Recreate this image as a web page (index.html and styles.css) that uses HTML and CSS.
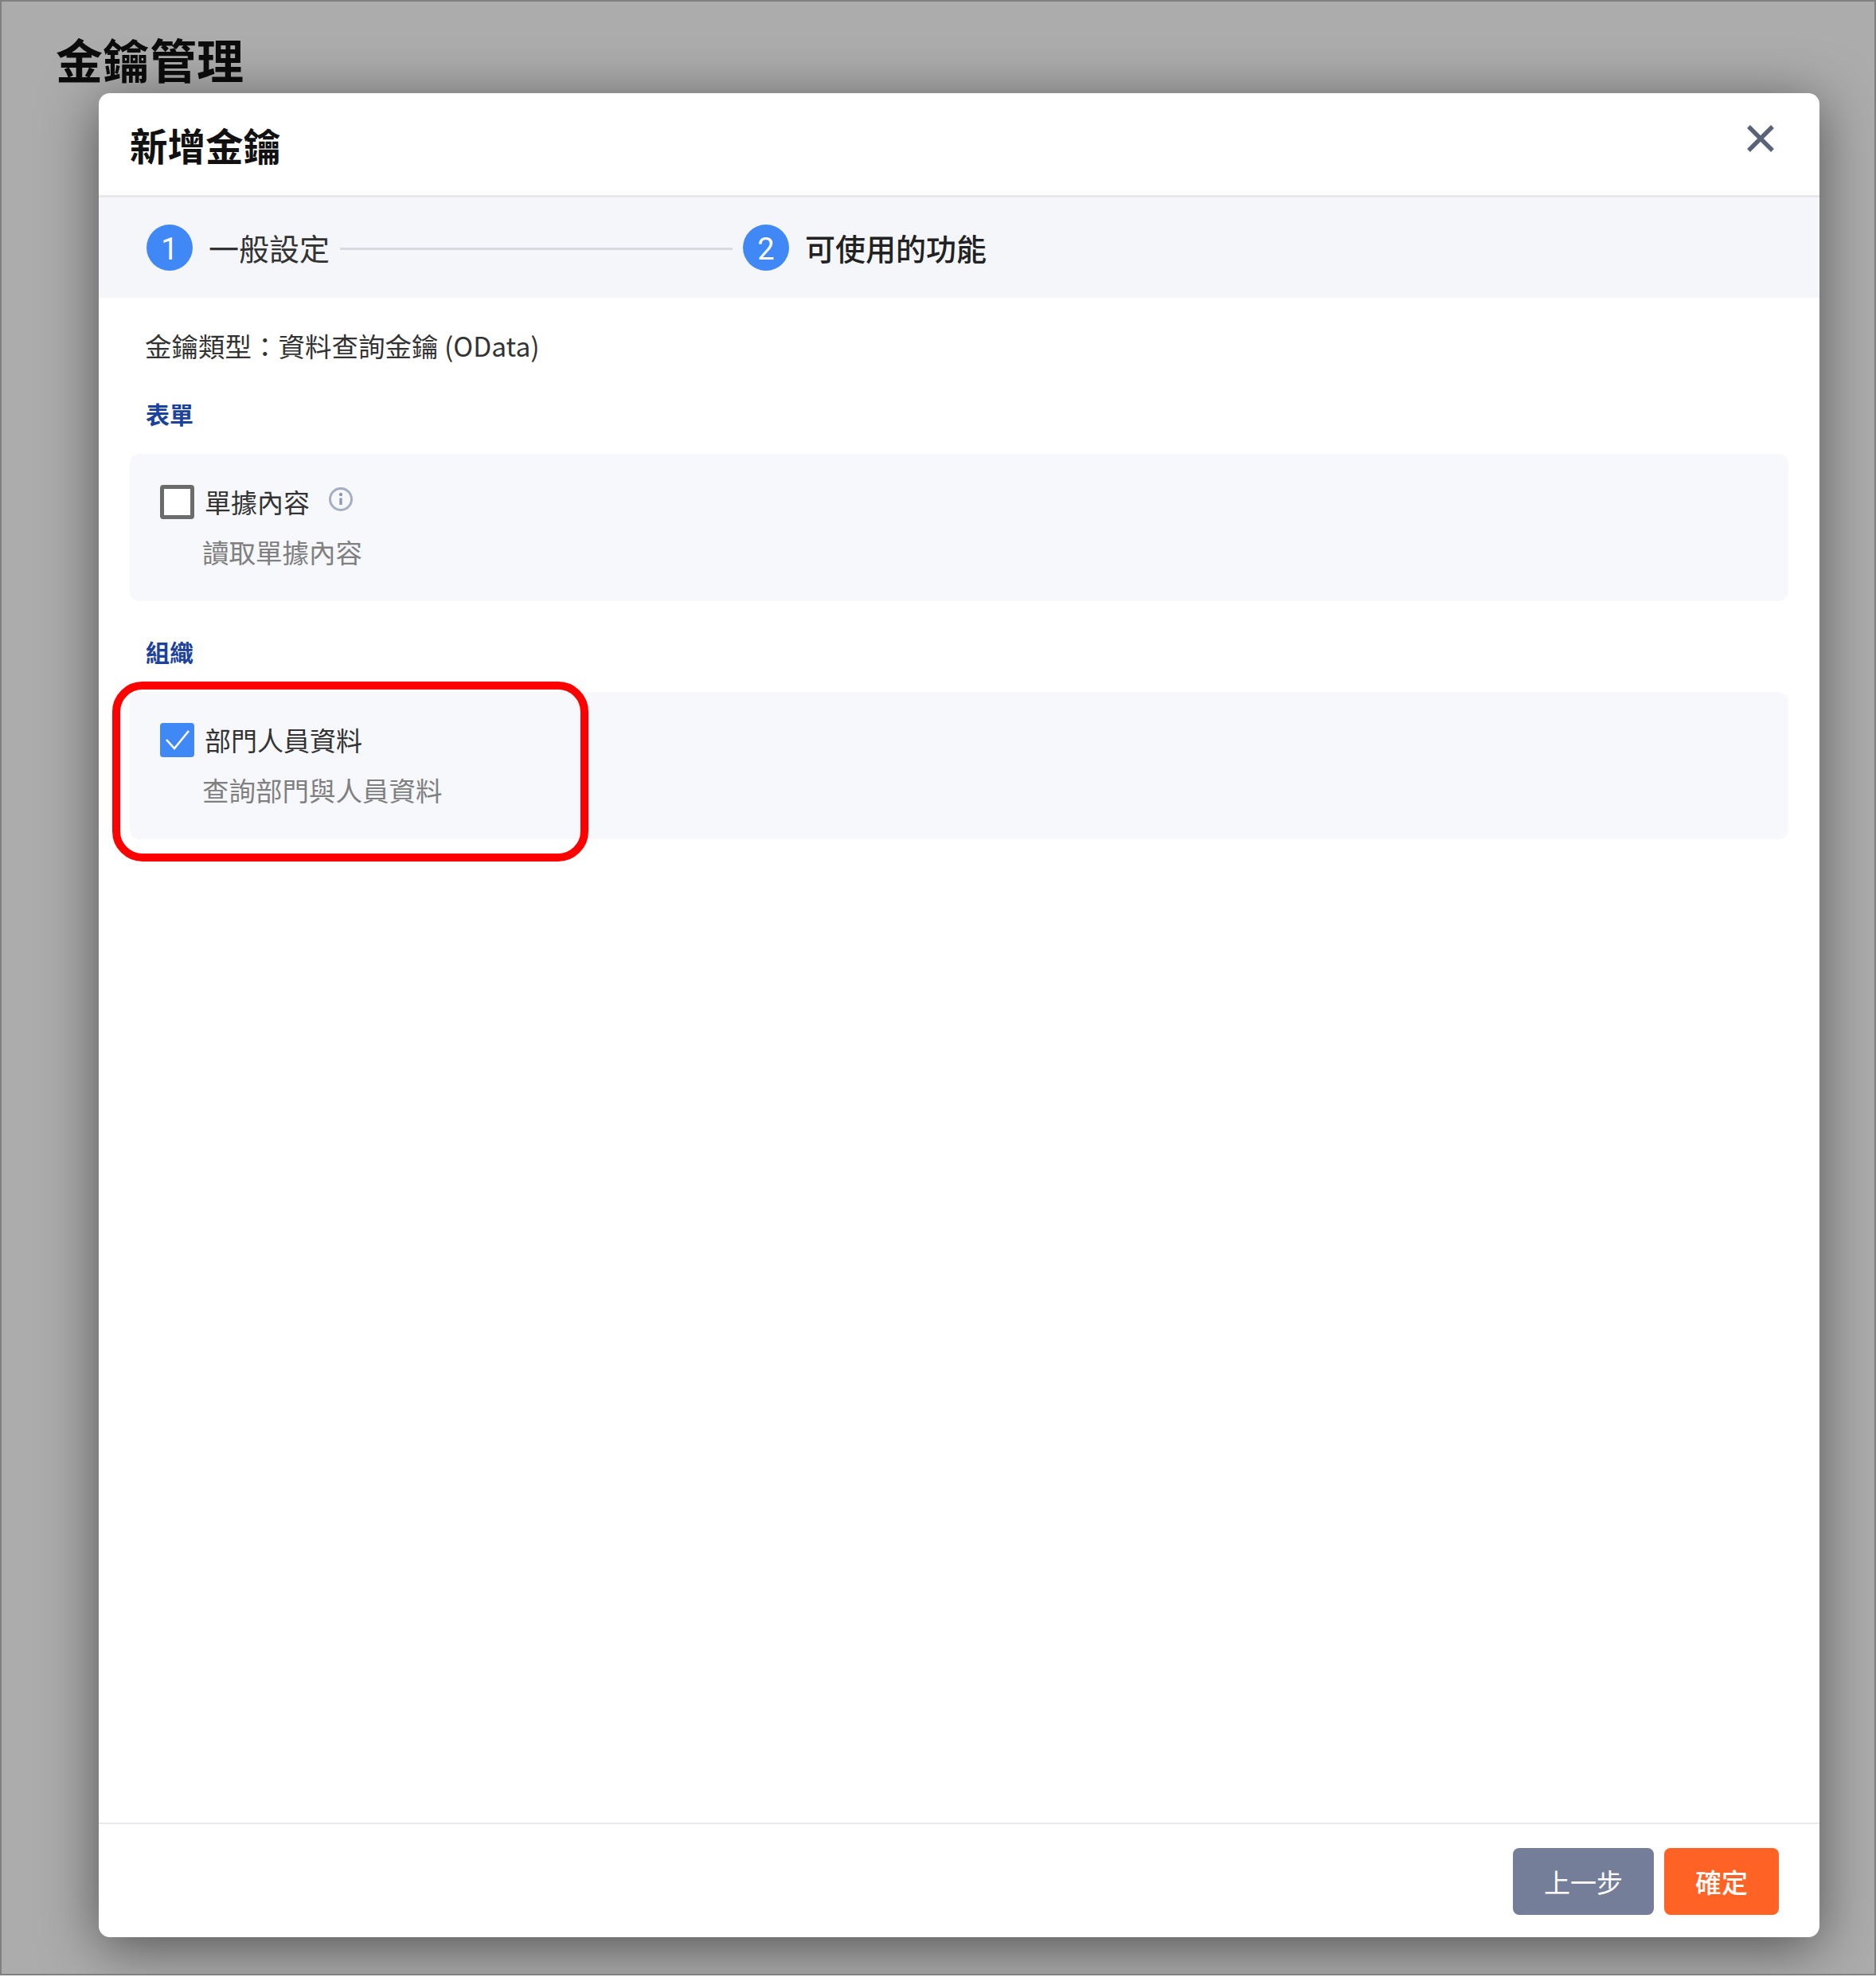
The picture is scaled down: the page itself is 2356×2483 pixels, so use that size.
FILE: index.html
```html
<!DOCTYPE html>
<html lang="zh-Hant">
<head>
<meta charset="utf-8">
<title>金鑰管理</title>
<link rel="stylesheet" href="styles.css">
</head>
<body>
<div class="screen">
  <h1 class="page-title">金鑰管理</h1>
  <section class="modal">
    <header class="modal-head">
      <h2 class="modal-title">新增金鑰</h2>
      <button class="close" aria-label="關閉">
        <svg viewBox="0 0 36 36" width="36" height="36"><path d="M3 3L33 33M33 3L3 33" fill="none" stroke="#5a6478" stroke-width="5.4"/></svg>
      </button>
    </header>
    <div class="steps">
      <span class="step-num">1</span>
      <span class="step-label">一般設定</span>
      <span class="step-line"></span>
      <span class="step-num">2</span>
      <span class="step-label step-current">可使用的功能</span>
    </div>
    <div class="modal-body">
      <p class="key-type">金鑰類型：資料查詢金鑰 (OData)</p>
      <h3 class="group-title">表單</h3>
      <div class="card">
        <div class="row">
          <span class="check"></span>
          <span class="label">單據內容</span>
          <svg class="info" viewBox="0 0 32 32" width="32" height="32"><circle cx="16" cy="16" r="13.5" fill="none" stroke="#a3aec4" stroke-width="3"/><circle cx="16" cy="10" r="2.2" fill="#8e9ab4"/><path d="M16 14.5V23" stroke="#8e9ab4" stroke-width="3.4"/></svg>
        </div>
        <p class="desc">讀取單據內容</p>
      </div>
      <h3 class="group-title group-second">組織</h3>
      <div class="card card-second">
        <div class="row">
          <span class="check checked">
            <svg viewBox="0 0 42 42" width="42" height="42"><path d="M7 21L17 32L35 10" fill="none" stroke="#fff" stroke-width="2.6"/></svg>
          </span>
          <span class="label">部門人員資料</span>
        </div>
        <p class="desc">查詢部門與人員資料</p>
      </div>
    </div>
    <footer class="modal-foot">
      <button class="btn btn-back">上一步</button>
      <button class="btn btn-ok">確定</button>
    </footer>
  </section>
  <div class="highlight"></div>
</div>
</body>
</html>
```
FILE: styles.css
```css
* { box-sizing: border-box; }
html, body { margin: 0; padding: 0; background: #fff; }
body { font-family: "Noto Sans CJK TC", "Noto Sans", sans-serif; }
.screen {
  position: relative;
  width: 2356px;
  height: 2481px;
  overflow: hidden;
  background: #acacac;
  border: 2px solid #808080;
  padding: 30px 0 0 68px;
}
.page-title {
  margin: 0;
  font-size: 59px;
  line-height: 84px;
  font-weight: 700;
  color: #0c0c0c;
}
.modal {
  position: absolute;
  left: 122px;
  top: 115px;
  width: 2161px;
  height: 2316px;
  display: flex;
  flex-direction: column;
  background: #fff;
  border-radius: 14px;
  box-shadow: 0 12px 70px rgba(0, 0, 0, 0.52);
}
.modal-head {
  flex: none;
  height: 131px;
  display: flex;
  align-items: center;
  justify-content: space-between;
  padding: 0 56px 0 39px;
  border-bottom: 3px solid #e6e8ee;
}
.modal-title {
  margin: 0;
  font-size: 47.5px;
  line-height: 68px;
  font-weight: 700;
  color: #111;
  position: relative;
  top: 1px;
}
.close {
  padding: 0;
  border: 0;
  background: none;
  display: flex;
  margin-top: -15px;
}
.steps {
  flex: none;
  height: 126px;
  display: flex;
  align-items: center;
  padding: 0 0 0 60px;
  background: #f4f6fa;
}
.step-num {
  flex: none;
  width: 58px;
  height: 58px;
  padding-top: 3px;
  border-radius: 50%;
  background: #4188f7;
  color: #fff;
  font-family: "Roboto", sans-serif;
  font-size: 38px;
  display: flex;
  align-items: center;
  justify-content: center;
}
.step-label {
  margin-left: 20px;
  font-size: 38px;
  line-height: 58px;
  color: #333;
}
.step-current { color: #222; font-weight: 500; }
.step-line {
  flex: none;
  width: 493px;
  height: 3px;
  margin: 2px 13px 0;
  background: #d6d9e0;
}
.modal-body {
  flex: 1;
  padding: 36px 39px 0;
}
.key-type {
  margin: 0 0 0 19px;
  font-size: 33.5px;
  line-height: 48px;
  color: #333;
}
.group-title {
  margin: 39px 0 0 20px;
  font-size: 30px;
  line-height: 44px;
  font-weight: 700;
  color: #1b429c;
}
.group-second { margin-top: 41px; }
.card {
  margin-top: 29px;
  height: 185px;
  padding: 38px 0 0 38px;
  border-radius: 12px;
  background: #f6f8fb;
}
.row {
  display: flex;
  align-items: center;
  height: 44px;
}
.check {
  flex: none;
  width: 43px;
  height: 43px;
  border: 5px solid #6b6b6b;
  border-radius: 4px;
  background: #fff;
}
.check.checked {
  border: 0;
  background: #4188f7;
  display: flex;
  align-items: center;
  justify-content: center;
}
.label {
  margin-left: 13px;
  font-size: 33px;
  line-height: 48px;
  color: #333;
}
.info { margin: -6px 0 0 23px; }
.desc {
  margin: 18px 0 0 53px;
  font-size: 33.5px;
  line-height: 46px;
  color: #808080;
}
.modal-foot {
  flex: none;
  height: 144px;
  display: flex;
  justify-content: flex-end;
  gap: 13px;
  padding: 30px 51px 0 0;
  border-top: 2px solid #e8eaf0;
}
.btn {
  height: 84px;
  border: 0;
  border-radius: 8px;
  color: #fff;
  font-family: inherit;
  font-size: 33px;
  padding: 0;
}
.btn-back { width: 177px; background: #757e98; }
.btn-ok { width: 144px; background: #ff6225; font-weight: 500; }
.highlight {
  position: absolute;
  left: 139px;
  top: 854px;
  width: 598px;
  height: 226px;
  border: 10px solid #f00;
  border-radius: 38px;
}
```
